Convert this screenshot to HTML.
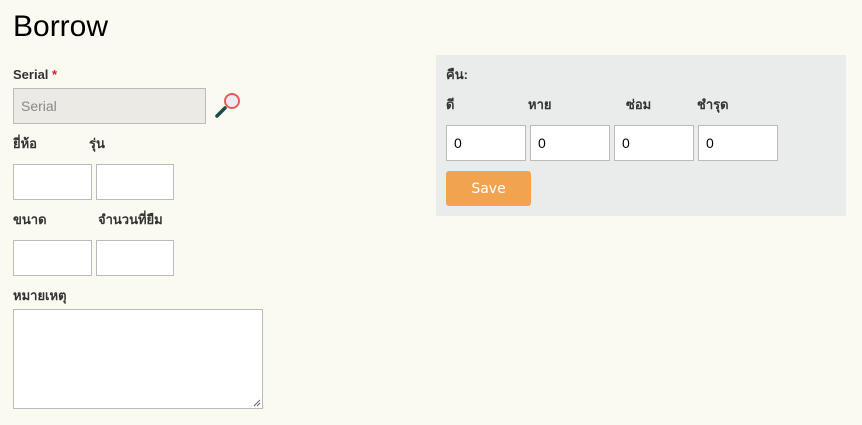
<!DOCTYPE html>
<html><head><meta charset="utf-8"><style>
*{box-sizing:border-box;margin:0;padding:0}
body{width:862px;height:425px;background:#fbfaf1;font-family:"Liberation Sans",sans-serif;position:relative;overflow:hidden;color:#333}
.a{position:absolute}
h1{position:absolute;left:13px;top:10px;font-size:30px;font-weight:normal;color:#000;font-family:"Liberation Sans",sans-serif}
.l{position:absolute;font-size:13px;font-weight:bold;color:#333;font-family:"Liberation Sans","DejaVu Sans",sans-serif;line-height:16px}
.i{position:absolute;background:#fff;border:1px solid #bbb;font-size:14px;color:#000;padding-left:7px;display:flex;align-items:center}
</style></head><body>
<h1>Borrow</h1>
<div class="l" style="left:13px;top:67px">Serial <span style="color:#e0192c">*</span></div>
<div class="i" style="left:13px;top:88px;width:193px;height:36px;background:#ebeae4;color:#888;font-size:14px">Serial</div>
<svg class="a" style="left:210px;top:88px" width="34" height="32" viewBox="0 0 34 32">
<circle cx="22" cy="13" r="7" fill="#eeeaf0" stroke="#e85b5b" stroke-width="2"/>
<line x1="7" y1="28" x2="15" y2="20" stroke="#1f4a4a" stroke-width="3.5" stroke-linecap="round"/>
</svg>
<div class="l" style="left:13px;top:136px">ยี่ห้อ</div>
<div class="l" style="left:89px;top:136px">รุ่น</div>
<div class="i" style="left:13px;top:164px;width:79px;height:36px"></div>
<div class="i" style="left:96px;top:164px;width:78px;height:36px"></div>
<div class="l" style="left:13px;top:212px">ขนาด</div>
<div class="l" style="left:98px;top:212px">จำนวนที่ยืม</div>
<div class="i" style="left:13px;top:240px;width:79px;height:36px"></div>
<div class="i" style="left:96px;top:240px;width:78px;height:36px"></div>
<div class="l" style="left:13px;top:288px">หมายเหตุ</div>
<div class="i" style="left:13px;top:309px;width:250px;height:100px"></div>
<svg class="a" style="left:253px;top:399px" width="8" height="8"><path d="M1 7L7 1M4 7L7 4" stroke="#666" stroke-width="1"/></svg>

<div class="a" style="left:436px;top:55px;width:410px;height:161px;background:#e9ecea"></div>
<div class="l" style="left:446px;top:67px">คืน:</div>
<div class="l" style="left:446px;top:97px">ดี</div>
<div class="l" style="left:528px;top:97px">หาย</div>
<div class="l" style="left:626px;top:97px">ซ่อม</div>
<div class="l" style="left:697px;top:97px">ชำรุด</div>
<div class="i" style="left:446px;top:125px;width:80px;height:36px">0</div>
<div class="i" style="left:530px;top:125px;width:80px;height:36px">0</div>
<div class="i" style="left:614px;top:125px;width:80px;height:36px">0</div>
<div class="i" style="left:698px;top:125px;width:80px;height:36px">0</div>
<div class="a" style="left:446px;top:171px;width:85px;height:35px;background:#f2a350;border-radius:3px;color:#fff;font-size:14px;display:flex;align-items:center;justify-content:center;font-family:'DejaVu Sans','Liberation Sans',sans-serif">Save</div>
</body></html>
